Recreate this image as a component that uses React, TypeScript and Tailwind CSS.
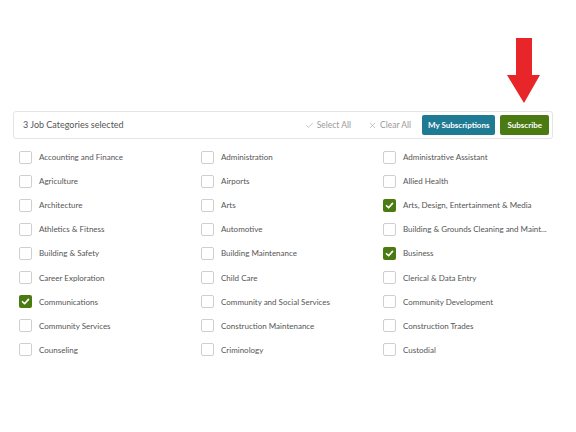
import { Check, X } from "lucide-react";

const categories: { name: string; checked?: boolean }[] = [
  { name: "Accounting and Finance" },
  { name: "Administration" },
  { name: "Administrative Assistant" },
  { name: "Agriculture" },
  { name: "Airports" },
  { name: "Allied Health" },
  { name: "Architecture" },
  { name: "Arts" },
  { name: "Arts, Design, Entertainment & Media", checked: true },
  { name: "Athletics & Fitness" },
  { name: "Automotive" },
  { name: "Building & Grounds Cleaning and Maint..." },
  { name: "Building & Safety" },
  { name: "Building Maintenance" },
  { name: "Business", checked: true },
  { name: "Career Exploration" },
  { name: "Child Care" },
  { name: "Clerical & Data Entry" },
  { name: "Communications", checked: true },
  { name: "Community and Social Services" },
  { name: "Community Development" },
  { name: "Community Services" },
  { name: "Construction Maintenance" },
  { name: "Construction Trades" },
  { name: "Counseling" },
  { name: "Criminology" },
  { name: "Custodial" },
];

const Box = ({ checked }: { checked?: boolean }) =>
  checked ? (
    <span className="flex h-[13px] w-[13px] shrink-0 items-center justify-center rounded-[2px] bg-[#4b7a12]">
      <svg viewBox="0 0 12 12" className="h-[9px] w-[9px]">
        <path d="M2 6.3 L4.8 9 L10 3.2" fill="none" stroke="#fff" strokeWidth="2.2" strokeLinecap="round" strokeLinejoin="round" />
      </svg>
    </span>
  ) : (
    <span className="h-[13px] w-[13px] shrink-0 rounded-[2px] border border-[#cfcfcf] bg-white" />
  );

const App = () => {
  return (
    <div className="h-[432px] w-[576px] bg-white text-[#555] [font-family:Lato,'Liberation_Sans',sans-serif]">
      <div className="flex h-[111px] items-start justify-end pr-[35px] pt-[38px]">
        <svg width="34" height="66" viewBox="0 0 34 66">
          <path d="M9 0 H25 V37 H33 L17 65 L0 37 H9 Z" fill="#e8262a" />
        </svg>
      </div>

      <div className="px-[13px]">
        <div className="flex h-[28px] w-[540px] items-center rounded-[3px] border border-[#e4e4e4] pl-[9px] pr-[3px] text-[9px]">
          <span className="text-[#555]">3 Job Categories selected</span>
          <div className="ml-auto flex items-center text-[8.5px] text-[#9a9a9a]">
            <span className="flex items-center gap-[3px]">
              <Check size={9} strokeWidth={1.5} />
              Select All
            </span>
            <span className="ml-[17px] flex items-center gap-[3px]">
              <X size={9} strokeWidth={1.5} />
              Clear All
            </span>
            <button className="ml-[11px] h-[20px] rounded-[2px] bg-[#1f7a93] px-[6px] text-[8px] font-bold text-white">
              My Subscriptions
            </button>
            <button className="ml-[5px] h-[20px] rounded-[2px] bg-[#4b7a12] px-[7px] text-[8px] font-bold text-white">
              Subscribe
            </button>
          </div>
        </div>

        <div className="grid grid-cols-[182px_182px_176px] pl-[6px] pt-[6px]">
          {categories.map((c) => (
            <div key={c.name} className="flex h-[24.1px] items-center gap-[7px] text-[8px]">
              <Box checked={c.checked} />
              <span className="whitespace-nowrap">{c.name}</span>
            </div>
          ))}
        </div>
      </div>
    </div>
  );
};

export default App;
